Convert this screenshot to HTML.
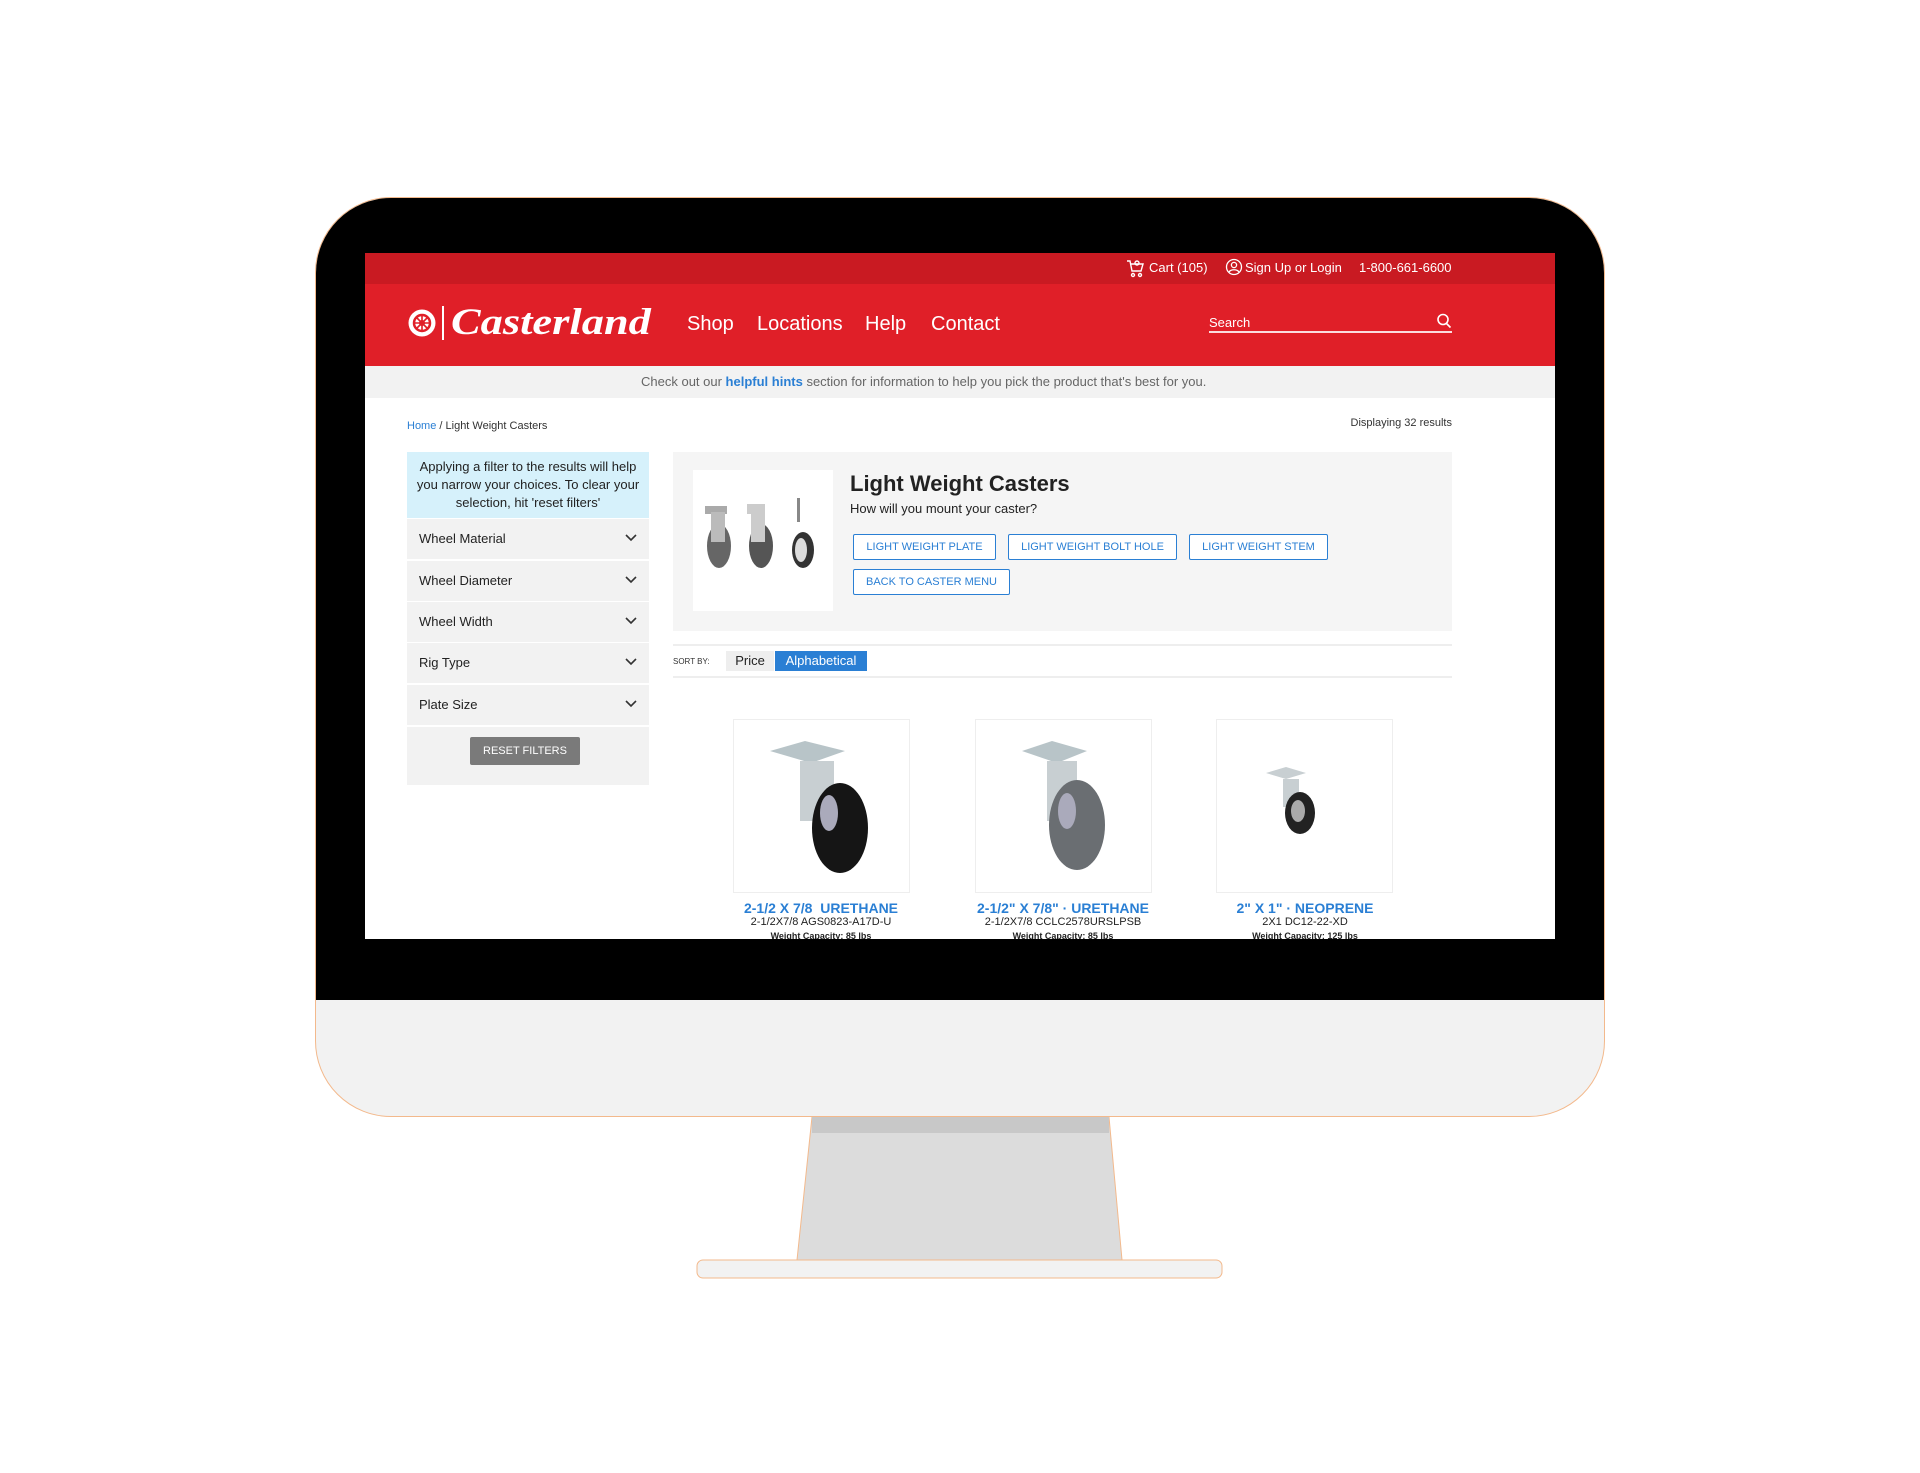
<!DOCTYPE html>
<html><head><meta charset="utf-8"><style>
*{margin:0;padding:0;box-sizing:border-box}
body{width:1920px;height:1473px;background:#fff;position:relative;overflow:hidden;font-family:"Liberation Sans",Arial,sans-serif}
.a{position:absolute}
.mon{left:315px;top:197px;width:1290px;height:920px;border-radius:76px;background:#f2f2f2;border:1px solid #f3b98c;overflow:hidden}
.blk{left:0;top:0;width:1290px;height:802px;background:#000}
.scr{left:365px;top:253px;width:1190px;height:686px;background:#fff;overflow:hidden}
.s{position:absolute;white-space:nowrap}
.filt{left:42px;width:242px;height:40px;background:#f2f2f2;font-size:13px;color:#222;padding-left:12px;line-height:40px}
.filt svg{position:absolute;right:12px;top:15px}
.btn{position:absolute;height:26px;border:1px solid #2a7fd4;color:#2a7fd4;background:#fff;font-size:11px;text-align:center;line-height:24px;border-radius:2px}
.card{position:absolute;top:466px;width:177px;height:174px;border:1px solid #eee;background:#fff}
.pt{position:absolute;top:647px;font-size:14px;font-weight:bold;color:#2a7fd4;text-align:center;width:240px}
.ps{position:absolute;top:663px;font-size:11px;color:#222;text-align:center;width:240px}
.pw{position:absolute;top:678px;font-size:9px;color:#222;text-align:center;width:240px;font-weight:bold}
</style></head><body>
<div class="a mon"><div class="a blk"></div></div>
<svg class="a" style="left:690px;top:1116px" width="540" height="165">
<polygon points="122,1 419,1 432,144 107,144" fill="#dcdcdc" stroke="#f3b98c" stroke-width="1"/>
<rect x="122" y="1" width="297" height="16" fill="#c8c8c8"/>
<rect x="7" y="144" width="525" height="18" rx="6" fill="#f2f2f2" stroke="#f3b98c"/>
</svg>
<div class="a scr">
 <div class="s" style="left:0;top:0;width:1190px;height:31px;background:#c91a22"></div>
 <div class="s" style="left:0;top:31px;width:1190px;height:82px;background:#e01f28"></div>
 <svg class="s" style="left:761px;top:5px" width="20" height="20" viewBox="0 0 20 20" fill="none" stroke="#fff" stroke-width="1.4"><path d="M1 3h3l2 10h9l2-7H5"/><circle cx="7" cy="17" r="1.5"/><circle cx="14" cy="17" r="1.5"/><circle cx="11" cy="5" r="2"/></svg>
 <div class="s" style="left:784px;top:7px;color:#fff;font-size:13px">Cart (105)</div>
 <svg class="s" style="left:860px;top:5px" width="18" height="18" viewBox="0 0 18 18" fill="none" stroke="#fff" stroke-width="1.3"><circle cx="9" cy="9" r="7.5"/><circle cx="9" cy="7" r="2.6"/><path d="M4 14c2-3 8-3 10 0"/></svg>
 <div class="s" style="left:880px;top:7px;color:#fff;font-size:13px">Sign Up or Login</div>
 <div class="s" style="left:994px;top:7px;color:#fff;font-size:13px">1-800-661-6600</div>
 <svg class="s" style="left:42px;top:55px" width="30" height="30" viewBox="0 0 30 30"><circle cx="15" cy="15" r="13.5" fill="#fff"/><circle cx="15" cy="15" r="8" fill="none" stroke="#e01f28" stroke-width="2.5"/><circle cx="15" cy="15" r="3" fill="#e01f28"/><path d="M15 7v16M7 15h16M9.5 9.5l11 11M20.5 9.5l-11 11" stroke="#e01f28" stroke-width="1.6"/></svg>
 <div class="s" style="left:77px;top:53px;width:2px;height:34px;background:#fff"></div>
 <div class="s" style="left:86px;top:48px;color:#fff;font-size:37px;font-weight:bold;font-style:italic;font-family:'Liberation Serif',serif;transform:scaleX(1.2);transform-origin:left center">Casterland</div>
 <div class="s" style="left:322px;top:60px;color:#fff;font-size:20px">Shop</div>
 <div class="s" style="left:392px;top:60px;color:#fff;font-size:20px">Locations</div>
 <div class="s" style="left:500px;top:60px;color:#fff;font-size:20px">Help</div>
 <div class="s" style="left:566px;top:60px;color:#fff;font-size:20px">Contact</div>
 <div class="s" style="left:844px;top:62px;color:#fff;font-size:13px">Search</div>
 <div class="s" style="left:844px;top:78px;width:243px;height:2px;background:#fff;opacity:.85"></div>
 <svg class="s" style="left:1071px;top:60px" width="16" height="16" viewBox="0 0 16 16" fill="none" stroke="#fff" stroke-width="1.6"><circle cx="7" cy="6.5" r="5"/><path d="M10.5 10.5l4 4"/></svg>
 <div class="s" style="left:0;top:113px;width:1190px;height:32px;background:#f2f2f2"></div>
 <div class="s" style="left:276px;top:113px;line-height:32px;font-size:13px;color:#666">Check out our <b style="color:#2a7fd4">helpful hints</b> section for information to help you pick the product that's best for you.</div>
 <div class="s" style="left:42px;top:167px;font-size:11px;color:#333"><span style="color:#2a7fd4">Home</span> / Light Weight Casters</div>
 <div class="s" style="right:103px;top:164px;font-size:11px;color:#333">Displaying 32 results</div>
 <div class="s" style="left:42px;top:199px;width:242px;height:66px;background:#d6f1fb;font-size:13px;color:#222;text-align:center;line-height:18px;padding:6px 4px 0;white-space:normal">Applying a filter to the results will help you narrow your choices. To clear your selection, hit 'reset filters'</div>
 <div class="s filt" style="top:266px">Wheel Material<svg width="12" height="8"><path d="M1 1l5 5 5-5" fill="none" stroke="#333" stroke-width="1.6"/></svg></div>
 <div class="s filt" style="top:308px">Wheel Diameter<svg width="12" height="8"><path d="M1 1l5 5 5-5" fill="none" stroke="#333" stroke-width="1.6"/></svg></div>
 <div class="s filt" style="top:349px">Wheel Width<svg width="12" height="8"><path d="M1 1l5 5 5-5" fill="none" stroke="#333" stroke-width="1.6"/></svg></div>
 <div class="s filt" style="top:390px">Rig Type<svg width="12" height="8"><path d="M1 1l5 5 5-5" fill="none" stroke="#333" stroke-width="1.6"/></svg></div>
 <div class="s filt" style="top:432px">Plate Size<svg width="12" height="8"><path d="M1 1l5 5 5-5" fill="none" stroke="#333" stroke-width="1.6"/></svg></div>
 <div class="s" style="left:42px;top:474px;width:242px;height:58px;background:#f2f2f2"></div>
 <div class="s" style="left:105px;top:484px;width:110px;height:28px;background:#7a7a7a;color:#fff;font-size:11px;text-align:center;line-height:28px;border-radius:2px">RESET FILTERS</div>
 <div class="s" style="left:308px;top:199px;width:779px;height:179px;background:#f5f5f5"></div>
 <div class="s" style="left:328px;top:217px;width:140px;height:141px;background:#fff"></div>
 <svg class="s" style="left:332px;top:245px" width="130" height="80" viewBox="0 0 130 80">
  <rect x="8" y="8" width="22" height="8" fill="#aaa"/><ellipse cx="22" cy="48" rx="12" ry="22" fill="#666"/><rect x="14" y="14" width="14" height="30" fill="#bbb"/>
  <rect x="50" y="6" width="18" height="10" fill="#ccc"/><ellipse cx="64" cy="48" rx="12" ry="22" fill="#555"/><rect x="54" y="14" width="14" height="30" fill="#ccc"/>
  <rect x="100" y="0" width="3" height="24" fill="#888"/><ellipse cx="106" cy="52" rx="11" ry="18" fill="#333"/><ellipse cx="104" cy="52" rx="6" ry="12" fill="#ddd"/>
 </svg>
 <div class="s" style="left:485px;top:218px;font-size:22px;font-weight:bold;color:#222">Light Weight Casters</div>
 <div class="s" style="left:485px;top:248px;font-size:13px;color:#222">How will you mount your caster?</div>
 <div class="btn" style="left:488px;top:281px;width:143px">LIGHT WEIGHT PLATE</div>
 <div class="btn" style="left:643px;top:281px;width:169px">LIGHT WEIGHT BOLT HOLE</div>
 <div class="btn" style="left:824px;top:281px;width:139px">LIGHT WEIGHT STEM</div>
 <div class="btn" style="left:488px;top:316px;width:157px">BACK TO CASTER MENU</div>
 <div class="s" style="left:308px;top:391px;width:779px;height:2px;background:#eee"></div>
 <div class="s" style="left:308px;top:423px;width:779px;height:2px;background:#eee"></div>
 <div class="s" style="left:308px;top:404px;font-size:8px;color:#333">SORT BY:</div>
 <div class="s" style="left:361px;top:398px;width:48px;height:20px;background:#eee;font-size:13px;color:#222;text-align:center;line-height:20px">Price</div>
 <div class="s" style="left:410px;top:398px;width:92px;height:20px;background:#2a7fd4;font-size:13px;color:#fff;text-align:center;line-height:20px">Alphabetical</div>
 <div class="card" style="left:368px"></div><div class="card" style="left:610px"></div><div class="card" style="left:851px"></div>
 <svg class="s" style="left:390px;top:480px" width="130" height="145" viewBox="0 0 130 145">
  <polygon points="15,18 50,8 90,18 56,30" fill="#b8c4c8"/><rect x="45" y="28" width="34" height="60" fill="#c8cfd2"/><ellipse cx="85" cy="95" rx="28" ry="45" fill="#151515"/><ellipse cx="74" cy="80" rx="9" ry="18" fill="#aab"/>
 </svg>
 <svg class="s" style="left:632px;top:480px" width="130" height="145" viewBox="0 0 130 145">
  <polygon points="25,18 55,8 90,18 60,30" fill="#b8c4c8"/><rect x="50" y="28" width="30" height="60" fill="#c8cfd2"/><ellipse cx="80" cy="92" rx="28" ry="45" fill="#6a6e72"/><ellipse cx="70" cy="78" rx="9" ry="18" fill="#aab"/>
 </svg>
 <svg class="s" style="left:873px;top:480px" width="130" height="145" viewBox="0 0 130 145">
  <polygon points="28,40 48,34 68,40 48,46" fill="#c8cfd2"/><rect x="45" y="46" width="16" height="28" fill="#c8cfd2"/><ellipse cx="62" cy="80" rx="15" ry="21" fill="#222"/><ellipse cx="60" cy="78" rx="7" ry="11" fill="#aaa"/>
 </svg>
 <div class="pt" style="left:336px">2-1/2 X 7/8&nbsp; URETHANE</div>
 <div class="ps" style="left:336px">2-1/2X7/8 AGS0823-A17D-U</div>
 <div class="pw" style="left:336px">Weight Capacity: 85 lbs</div>
 <div class="pt" style="left:578px">2-1/2" X 7/8" · URETHANE</div>
 <div class="ps" style="left:578px">2-1/2X7/8 CCLC2578URSLPSB</div>
 <div class="pw" style="left:578px">Weight Capacity: 85 lbs</div>
 <div class="pt" style="left:820px">2" X 1" · NEOPRENE</div>
 <div class="ps" style="left:820px">2X1 DC12-22-XD</div>
 <div class="pw" style="left:820px">Weight Capacity: 125 lbs</div>
</div>
</body></html>
